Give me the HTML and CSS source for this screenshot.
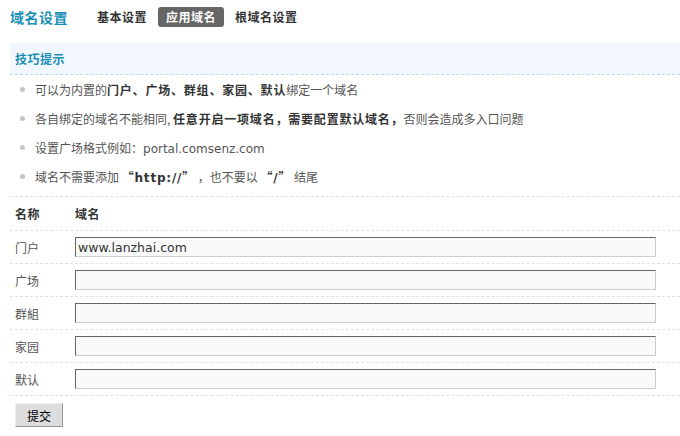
FILE: index.html
```html
<!DOCTYPE html>
<html lang="zh-CN">
<head>
<meta charset="utf-8">
<title>域名设置</title>
<link rel="stylesheet" href="styles.css">
</head>
<body>
<div class="page">
  <div class="topbar">
    <h3 class="title">域名设置</h3>
    <ul class="tabs">
      <li class="tab">基本设置</li>
      <li class="tab active">应用域名</li>
      <li class="tab">根域名设置</li>
    </ul>
  </div>

  <div class="tips-head">技巧提示</div>
  <ul class="tips">
    <li>可以为内置的<b>门户、广场、群组、家园、默认</b>绑定一个域名</li>
    <li>各自绑定的域名不能相同, <b>任意开启一项域名，需要配置默认域名，</b>否则会造成多入口问题</li>
    <li>设置广场格式例如：<span class="lat">portal.comsenz.com</span></li>
    <li>域名不需要添加 <b>“<span class="lat">http://</span>”</b> ，也不要以 <b>“<span class="lat">/</span>”</b> 结尾</li>
  </ul>

  <form class="domains">
    <div class="row head"><span class="label">名称</span><span class="field">域名</span></div>
    <div class="row"><span class="label">门户</span><input class="txt" type="text" value="www.lanzhai.com"></div>
    <div class="row"><span class="label">广场</span><input class="txt" type="text" value=""></div>
    <div class="row"><span class="label">群組</span><input class="txt" type="text" value=""></div>
    <div class="row"><span class="label">家园</span><input class="txt" type="text" value=""></div>
    <div class="row"><span class="label">默认</span><input class="txt" type="text" value=""></div>
    <div class="actions"><button type="button" class="btn">提交</button></div>
  </form>
</div>
</body>
</html>
```
FILE: styles.css
```css
html, body {
  margin: 0;
  padding: 0;
  background: #fff;
}
body {
  font-family: "DejaVu Sans", "Noto Sans CJK SC", sans-serif;
  font-size: 12px;
  color: #555;
}
.page {
  padding-left: 10px;
}
.topbar {
  display: flex;
  align-items: center;
  height: 20px;
  padding-top: 7px;
  padding-bottom: 16px;
}
.title {
  margin: 0;
  font-family: "Noto Sans CJK SC", sans-serif;
  font-size: 14px;
  font-weight: 700;
  color: #1a8fb5;
  letter-spacing: 0.5px;
  line-height: 20px;
}
.tabs {
  display: flex;
  gap: 3px;
  list-style: none;
  margin: 0 0 0 21px;
  padding: 0;
}
.tab {
  font-family: "Noto Sans CJK SC", sans-serif;
  font-weight: 700;
  font-size: 12px;
  color: #333;
  letter-spacing: 0.5px;
  line-height: 20px;
  height: 20px;
  padding: 0 8px;
  border-radius: 3px;
}
.tab.active {
  background: #666;
  color: #fff;
}
.tips-head {
  height: 31px;
  line-height: 31px;
  padding-left: 5px;
  background: #f2f7fd;
  border-bottom: 1px dashed #c9d4de;
  font-family: "Noto Sans CJK SC", sans-serif;
  font-weight: 700;
  color: #1a8fb5;
  letter-spacing: 0.5px;
}
.tips {
  list-style: none;
  margin: 0;
  padding: 0 0 5px 0;
}
.tips li {
  position: relative;
  height: 29px;
  line-height: 29px;
  padding-left: 25px;
  font-family: "Noto Sans CJK SC", sans-serif;
  color: #555;
}
.tips li::before {
  content: "";
  position: absolute;
  left: 10px;
  top: 12px;
  width: 5px;
  height: 5px;
  border-radius: 50%;
  background: #c4c4c4;
}
.tips b {
  color: #333;
  letter-spacing: 0.8px;
}
.lat {
  font-family: "DejaVu Sans", sans-serif;
  font-size: 12px;
}
.domains {
  margin: 0;
}
.row {
  display: flex;
  align-items: center;
  border-top: 1px dashed #dde3e8;
  padding: 6px 0;
  height: 20px;
}
.row.head {
  height: 21px;
  font-family: "Noto Sans CJK SC", sans-serif;
  font-weight: 700;
  color: #333;
}
.label {
  flex: 0 0 65px;
  width: 65px;
  padding-left: 5px;
  box-sizing: border-box;
  font-family: "Noto Sans CJK SC", sans-serif;
}
.row.head .label, .row.head .field {
  letter-spacing: 0.5px;
}
.txt {
  box-sizing: border-box;
  width: 581px;
  height: 20px;
  margin: 0;
  padding: 0 2px;
  background: #f9f9f9;
  border: 1px solid #ccc;
  border-top-color: #666;
  border-left-color: #666;
  font-family: "DejaVu Sans", sans-serif;
  font-size: 12.5px;
  color: #333;
}
.actions {
  border-top: 1px dashed #dde3e8;
  padding: 7px 0 0 5px;
}
.btn {
  box-sizing: border-box;
  width: 48px;
  height: 24px;
  padding: 0;
  background: #ddd;
  border: 1px solid #999;
  border-top-color: #eee;
  border-left-color: #eee;
  font-family: "Noto Sans CJK SC", sans-serif;
  font-size: 12px;
  color: #000;
}
```
